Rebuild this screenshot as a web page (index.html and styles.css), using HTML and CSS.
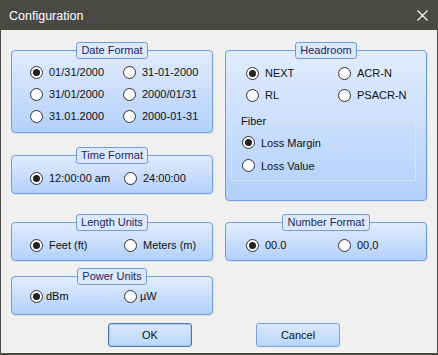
FILE: index.html
```html
<!DOCTYPE html>
<html lang="en">

<head>
    <meta charset="UTF-8">
    <title>Configuration</title>
    <link rel="stylesheet" href="styles.css">
</head>

<body>
    <div class="window">
        <div class="titlebar">
            <span class="title">Configuration</span>
            <svg class="close" width="11" height="11" viewBox="0 0 11 11">
                <path d="M0.5 0.5L10.5 10.5M10.5 0.5L0.5 10.5" stroke="#fff" stroke-width="1.1" fill="none"/>
            </svg>
        </div>

        <div class="columns">
            <!-- Left column -->
            <div class="column">
                <div class="group">
                    <div class="group-title">Date Format</div>
                    <div class="group-box date-grid">
                        <label class="option"><span class="radio checked"></span>01/31/2000</label>
                        <label class="option"><span class="radio"></span>31-01-2000</label>
                        <label class="option"><span class="radio"></span>31/01/2000</label>
                        <label class="option"><span class="radio"></span>2000/01/31</label>
                        <label class="option"><span class="radio"></span>31.01.2000</label>
                        <label class="option"><span class="radio"></span>2000-01-31</label>
                    </div>
                </div>

                <div class="group time-group">
                    <div class="group-title">Time Format</div>
                    <div class="group-box pair">
                        <label class="option"><span class="radio checked"></span>12:00:00 am</label>
                        <label class="option"><span class="radio"></span>24:00:00</label>
                    </div>
                </div>

                <div class="group length-group">
                    <div class="group-title">Length Units</div>
                    <div class="group-box pair">
                        <label class="option"><span class="radio checked"></span>Feet (ft)</label>
                        <label class="option"><span class="radio"></span>Meters (m)</label>
                    </div>
                </div>

                <div class="group power-group">
                    <div class="group-title">Power Units</div>
                    <div class="group-box pair power-box">
                        <label class="option tight"><span class="radio checked"></span>dBm</label>
                        <label class="option tight"><span class="radio"></span>µW</label>
                    </div>
                </div>
            </div>

            <!-- Right column -->
            <div class="column">
                <div class="group">
                    <div class="group-title">Headroom</div>
                    <div class="group-box headroom-box">
                        <div class="pair wide">
                            <label class="option"><span class="radio checked"></span>NEXT</label>
                            <label class="option"><span class="radio"></span>ACR-N</label>
                            <label class="option"><span class="radio"></span>RL</label>
                            <label class="option"><span class="radio"></span>PSACR-N</label>
                        </div>
                        <fieldset class="fiber">
                            <legend>Fiber</legend>
                            <label class="option fiber-option"><span class="radio checked"></span>Loss Margin</label>
                            <label class="option fiber-option"><span class="radio"></span>Loss Value</label>
                        </fieldset>
                    </div>
                </div>

                <div class="group number-group">
                    <div class="group-title">Number Format</div>
                    <div class="group-box pair wide">
                        <label class="option"><span class="radio checked"></span>00.0</label>
                        <label class="option"><span class="radio"></span>00,0</label>
                    </div>
                </div>
            </div>
        </div>

        <div class="buttons">
            <button class="btn btn-default">OK</button>
            <button class="btn">Cancel</button>
        </div>
    </div>
</body>

</html>
```

FILE: styles.css
```css
body {
    margin: 0;
    padding: 0;
    font-family: "Liberation Sans", Arial, sans-serif;
    font-size: 11px;
    color: #111;
    background-color: #f0f0f0;
}

.window {
    width: 438px;
    height: 355px;
    box-sizing: border-box;
    border: 1px solid #4b4946;
    border-top: none;
    border-bottom-width: 2px;
    background-color: #f0f0f0;
}

.titlebar {
    height: 30px;
    background-color: #4b4946;
    color: #fff;
    display: flex;
    align-items: center;
    justify-content: space-between;
    padding: 0 9px 0 8px;
}

.title {
    font-size: 12.5px;
    margin-top: 1px;
}

.close {
    display: block;
}

.columns {
    display: flex;
    gap: 12px;
    padding: 12px 0 0 10px;
}

.column {
    width: 202px;
    display: flex;
    flex-direction: column;
}

.group {
    display: flex;
    flex-direction: column;
}

.time-group {
    margin-top: 14px;
}

.length-group {
    margin-top: 20px;
}

.power-group {
    margin-top: 7px;
}

.number-group {
    margin-top: 13px;
}

.group-title {
    align-self: center;
    position: relative;
    z-index: 1;
    height: 17px;
    box-sizing: border-box;
    margin-bottom: -9px;
    padding: 0 4px;
    line-height: 15px;
    border: 1px solid #6e9de0;
    border-radius: 3px;
    background-color: #dce9fc;
    color: #1c2660;
}

.group-box {
    box-sizing: border-box;
    border: 1px solid #6e9de0;
    border-radius: 4px;
    background: linear-gradient(#e1ecfd, #b3d0fb);
    /* shadow on the bottom-right like the WinForms control */
    box-shadow: 1px 1px 0 rgba(0, 0, 0, 0.06);
}

.date-grid {
    display: grid;
    grid-template-columns: 93px auto;
    grid-auto-rows: 22px;
    padding: 10px 0 5px 18px;
}

.pair {
    display: grid;
    grid-template-columns: 94px auto;
    grid-auto-rows: 22px;
    padding: 11px 0 4px 18px;
}

.power-box {
    padding-top: 8px;
    padding-bottom: 7px;
}

.pair.wide {
    grid-template-columns: 92px auto;
    padding-left: 20px;
}

.headroom-box {
    height: 151px;
}

.headroom-box .pair {
    padding-bottom: 0;
}

.option {
    display: flex;
    align-items: center;
    gap: 6px;
    white-space: nowrap;
}

.option.tight {
    gap: 3px;
}

.radio {
    width: 13px;
    height: 13px;
    box-sizing: border-box;
    border: 1px solid #333;
    border-radius: 50%;
    background: radial-gradient(#fff 55%, #e8e8e8);
    position: relative;
    flex-shrink: 0;
}

.radio.checked::after {
    content: "";
    position: absolute;
    left: 2px;
    top: 2px;
    width: 7px;
    height: 7px;
    border-radius: 50%;
    background-color: #222;
}

.fiber {
    margin: 8px 10px 0 5px;
    padding: 3px 0 3px 10px;
    border: 1px solid #dbe3ec;
    display: flex;
    flex-direction: column;
}

.fiber legend {
    margin-left: -2px;
    padding: 0 1px;
    line-height: 14px;
    color: #111;
}

.fiber-option {
    height: 23px;
}

.buttons {
    display: flex;
    gap: 64px;
    margin-top: 8px;
    padding-left: 107px;
}

.btn {
    width: 84px;
    height: 24px;
    box-sizing: border-box;
    font-family: "Liberation Sans", Arial, sans-serif;
    font-size: 11px;
    color: #111;
    border: 1px solid #7c9fcf;
    border-radius: 3px;
    background: linear-gradient(#dce9fb, #b9d5f9);
    padding: 0;
}

.btn-default {
    border-color: #4a76a8;
    box-shadow: inset 0 0 0 1px #a9c9f0;
}
```
